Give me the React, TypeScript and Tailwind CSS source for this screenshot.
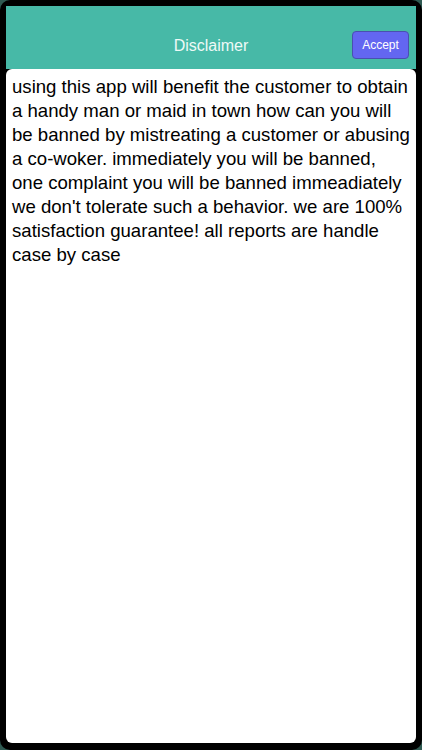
export default function App() {
  return (
    <div className="h-[750px] w-[422px] bg-[#2f5a52]">
      <div
        className="flex h-full w-full flex-col rounded-[10px] bg-black p-[6px] pb-[7px]"
        style={{ fontFamily: '"Liberation Sans", Arial, sans-serif' }}
      >
        {/* header */}
        <div className="relative flex h-[63px] shrink-0 items-center justify-center bg-[#47b9a7] pt-[16px]">
          <span className="text-[16px] text-[#eefaf7]">Disclaimer</span>
          <button className="absolute right-[7px] top-[25px] h-[28px] w-[57px] rounded-[4px] border border-[#4a4fb0] bg-[#6366f1] text-[12px] text-white">
            Accept
          </button>
        </div>

        {/* body */}
        <div className="flex-1 rounded-[6px] bg-white px-[6px] pt-[6px]">
          <p className="text-[18.6px] leading-[24px] text-black">
            using this app will benefit the customer to obtain a handy man or
            maid in town how can you will be banned by mistreating a customer or
            abusing a co-woker. immediately you will be banned, one complaint you
            will be banned immeadiately we don't tolerate such a behavior. we are
            100% satisfaction guarantee! all reports are handle case by case
          </p>
        </div>
      </div>
    </div>
  );
}
